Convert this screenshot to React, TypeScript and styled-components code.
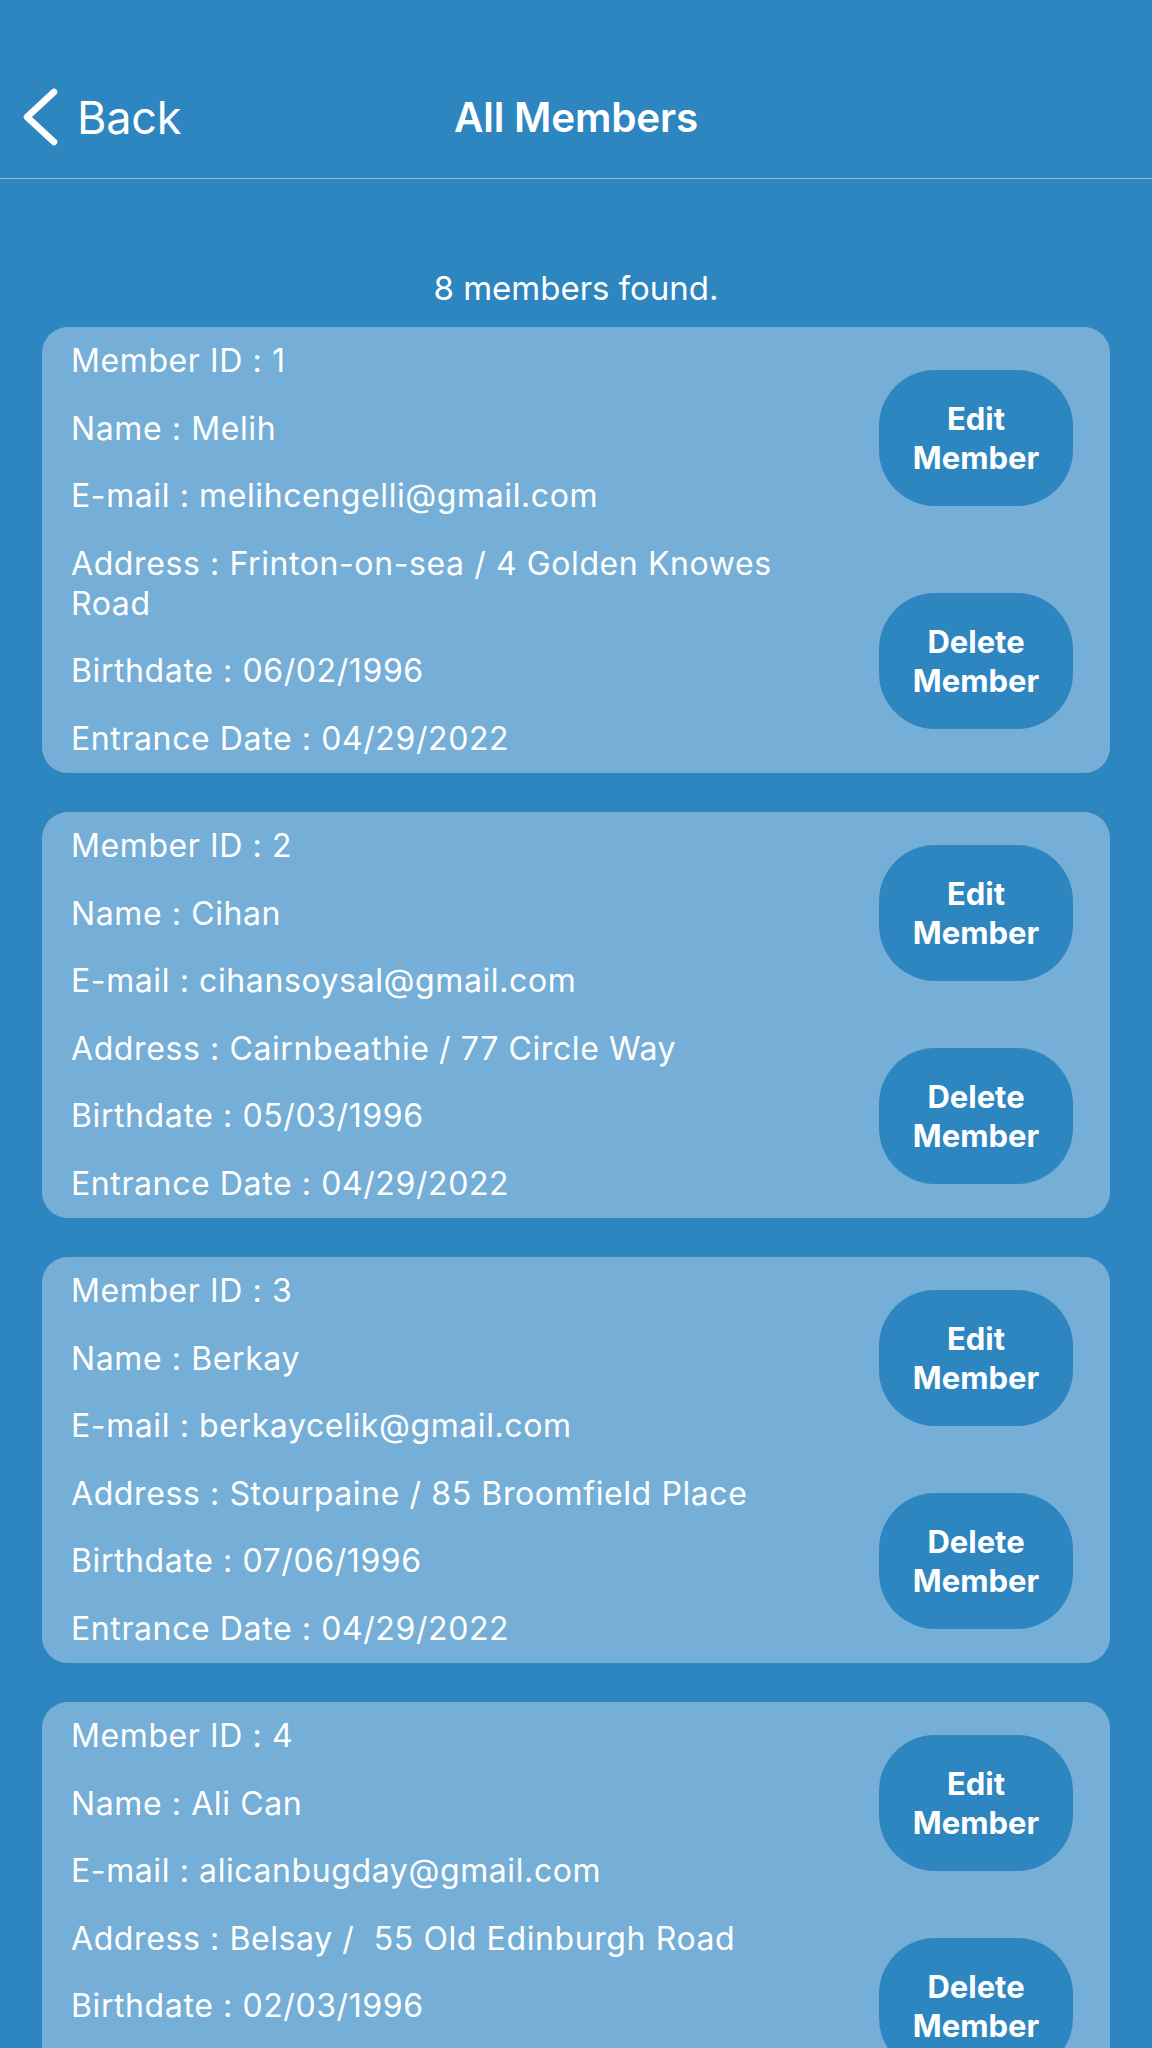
import React from "react";
import styled, { createGlobalStyle } from "styled-components";

const BLUE = "#2E86C1";
const CARD = "#75AFD7";

const GlobalStyle = createGlobalStyle`
  html, body {
    margin: 0;
    padding: 0;
    background: ${BLUE};
  }
  body {
    font-family: Inter, "Noto Sans", "Liberation Sans", sans-serif;
    color: #ffffff;
    -webkit-font-smoothing: antialiased;
  }
  * { box-sizing: border-box; }
`;

const Screen = styled.div`
  height: 100vh;
  display: flex;
  flex-direction: column;
  background: ${BLUE};
  overflow: hidden;
`;

const Header = styled.header`
  flex: none;
  height: 179px;
  padding-top: 56px;
  border-bottom: 1px solid #a9b6c2;
`;

const NavBar = styled.nav`
  height: 122px;
  display: grid;
  grid-template-columns: 1fr auto 1fr;
  align-items: center;
`;

const BackButton = styled.button`
  justify-self: start;
  display: flex;
  align-items: center;
  gap: 17px;
  padding: 0 0 0 20px;
  margin: 0;
  border: none;
  background: transparent;
  color: #ffffff;
  font-family: inherit;
  font-size: 45px;
  font-weight: 400;
  letter-spacing: -0.2px;
  cursor: pointer;
`;

const Title = styled.h1`
  margin: 0;
  font-size: 40.5px;
  font-weight: 600;
  letter-spacing: -0.2px;
`;

const Content = styled.main`
  flex: 1;
  overflow-y: auto;
  scrollbar-width: none;
  padding: 89px 42px 40px;
  &::-webkit-scrollbar { display: none; }
`;

const Count = styled.p`
  margin: 0 0 19px;
  text-align: center;
  font-size: 33px;
  line-height: 40px;
`;

const List = styled.div`
  display: flex;
  flex-direction: column;
  gap: 39.5px;
`;

const Card = styled.section`
  display: flex;
  background: ${CARD};
  border-radius: 26px;
  padding: 0 37px 0 29px;
`;

const Info = styled.div`
  flex: 1;
  min-width: 0;
  max-width: 760px;
  padding: 14px 0;
  display: flex;
  flex-direction: column;
  gap: 27.5px;
`;

const Line = styled.div`
  font-size: 32px;
  line-height: 40px;
  letter-spacing: 0.6px;
  white-space: pre-wrap;
`;

const Actions = styled.div`
  flex: none;
  width: 194px;
  margin-left: auto;
  display: flex;
  flex-direction: column;
  justify-content: space-around;
`;

const ActionButton = styled.button`
  height: 136px;
  width: 100%;
  border: none;
  border-radius: 56px;
  background: ${BLUE};
  color: #ffffff;
  font-family: inherit;
  font-size: 31px;
  font-weight: 700;
  line-height: 39px;
  padding: 0 20px;
  cursor: pointer;
`;

type Member = {
  id: number;
  name: string;
  email: string;
  address: string;
  birthdate: string;
  entrance: string;
};

const members: Member[] = [
  { id: 1, name: "Melih", email: "melihcengelli@gmail.com", address: "Frinton-on-sea / 4 Golden Knowes Road", birthdate: "06/02/1996", entrance: "04/29/2022" },
  { id: 2, name: "Cihan", email: "cihansoysal@gmail.com", address: "Cairnbeathie / 77 Circle Way", birthdate: "05/03/1996", entrance: "04/29/2022" },
  { id: 3, name: "Berkay", email: "berkaycelik@gmail.com", address: "Stourpaine / 85 Broomfield Place", birthdate: "07/06/1996", entrance: "04/29/2022" },
  { id: 4, name: "Ali Can", email: "alicanbugday@gmail.com", address: "Belsay /  55 Old Edinburgh Road", birthdate: "02/03/1996", entrance: "04/29/2022" },
  { id: 5, name: "Emre", email: "emreyilmaz@gmail.com", address: "Ashby / 12 Mill Lane", birthdate: "09/11/1996", entrance: "04/29/2022" },
  { id: 6, name: "Burak", email: "burakdemir@gmail.com", address: "Kelso / 31 High Street", birthdate: "01/08/1996", entrance: "04/29/2022" },
  { id: 7, name: "Mert", email: "mertkaya@gmail.com", address: "Alston / 9 Station Road", birthdate: "03/12/1996", entrance: "04/29/2022" },
  { id: 8, name: "Ece", email: "eceaydin@gmail.com", address: "Rye / 18 Church Walk", birthdate: "11/04/1996", entrance: "04/29/2022" },
];

const ChevronLeft = () => (
  <svg width="40" height="62" viewBox="0 0 40 62" aria-hidden="true">
    <path
      d="M34 6 L7 31 L34 56"
      fill="none"
      stroke="#ffffff"
      strokeWidth="6.5"
      strokeLinecap="round"
      strokeLinejoin="round"
    />
  </svg>
);

const MemberCard = ({ m }: { m: Member }) => (
  <Card>
    <Info>
      <Line>Member ID : {m.id}</Line>
      <Line>Name : {m.name}</Line>
      <Line>E-mail : {m.email}</Line>
      <Line>Address : {m.address}</Line>
      <Line>Birthdate : {m.birthdate}</Line>
      <Line>Entrance Date : {m.entrance}</Line>
    </Info>
    <Actions>
      <ActionButton>Edit<br />Member</ActionButton>
      <ActionButton>Delete<br />Member</ActionButton>
    </Actions>
  </Card>
);

export default function App() {
  return (
    <>
      <GlobalStyle />
      <Screen>
        <Header>
          <NavBar>
            <BackButton>
              <ChevronLeft />
              Back
            </BackButton>
            <Title>All Members</Title>
            <span />
          </NavBar>
        </Header>
        <Content>
          <Count>{members.length} members found.</Count>
          <List>
            {members.map((m) => (
              <MemberCard key={m.id} m={m} />
            ))}
          </List>
        </Content>
      </Screen>
    </>
  );
}
